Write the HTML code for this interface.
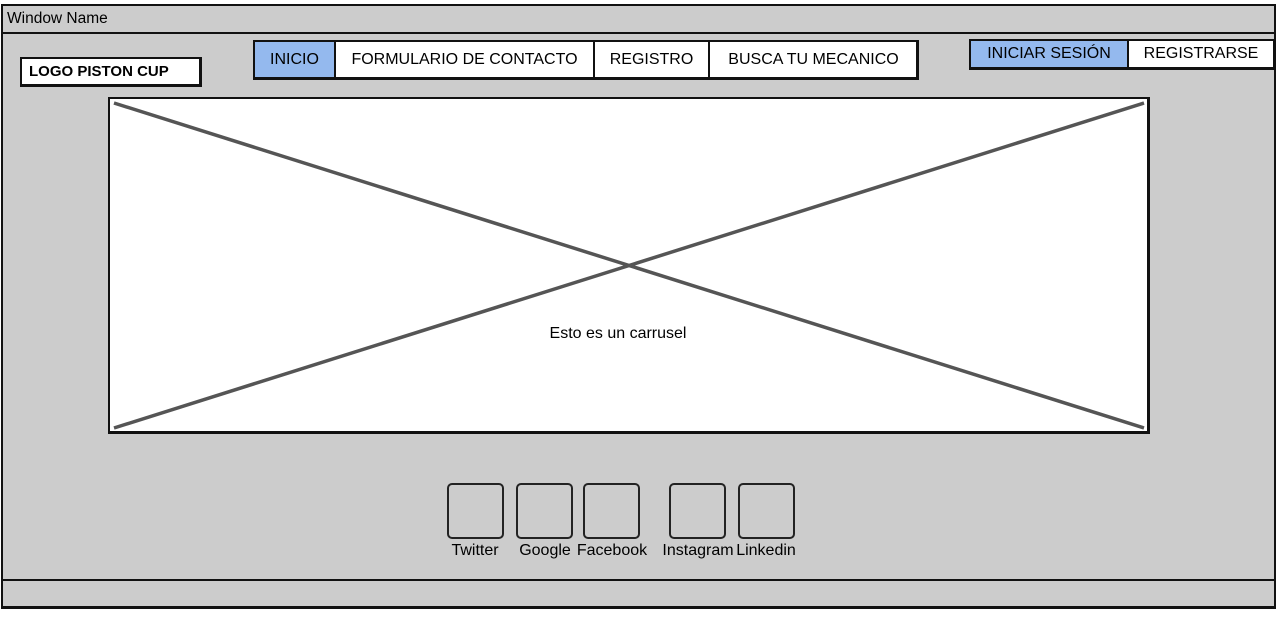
<!DOCTYPE html>
<html><head><style>
body{margin:0;width:1287px;height:618px;background:#fff;position:relative;overflow:hidden;font-family:"Liberation Sans",sans-serif;color:#000}
.a{position:absolute;box-sizing:border-box}
.t{display:flex;align-items:center;justify-content:center;font-size:16px}
.ic{border:2px solid #222;border-radius:5px}
.lb{font-size:16px;top:541px;height:20px;text-align:center}
</style></head><body>
<div class="a" style="left:1px;top:4px;width:1275px;height:605px;background:#ccc;border:2px solid #111"></div>
<div class="a" style="left:1px;top:4px;width:1275px;height:30px;border-bottom:2px solid #111;border-top:2px solid #111"></div>
<div class="a" style="left:7px;top:10px;font-size:15.5px">Window Name</div>
<div class="a t" style="left:20px;top:57px;width:182px;height:30px;background:#fff;border:2px solid #111;border-right-width:3px;border-bottom-width:3px;justify-content:flex-start;padding-left:7px;font-weight:bold;font-size:15px">LOGO PISTON CUP</div>
<div class="a" style="left:253px;top:40px;width:666px;height:40px;background:#fff;border:2px solid #111;border-right-width:3px;border-bottom-width:3px"></div>
<div class="a t" style="left:255px;top:42px;width:81px;height:35px;background:#94b9ee;border-right:2px solid #111">INICIO</div>
<div class="a t" style="left:336px;top:42px;width:259px;height:35px;border-right:2px solid #111">FORMULARIO DE CONTACTO</div>
<div class="a t" style="left:595px;top:42px;width:115px;height:35px;border-right:2px solid #111">REGISTRO</div>
<div class="a t" style="left:710px;top:42px;width:207px;height:35px">BUSCA TU MECANICO</div>
<div class="a" style="left:969px;top:39px;width:306px;height:31px;background:#fff;border:2px solid #111;border-bottom-width:3px"></div>
<div class="a t" style="left:971px;top:41px;width:158px;height:26px;background:#94b9ee;border-right:2px solid #111">INICIAR SESIÓN</div>
<div class="a t" style="left:1129px;top:41px;width:144px;height:26px">REGISTRARSE</div>
<div class="a" style="left:108px;top:97px;width:1042px;height:337px;background:#fff;border:2px solid #111;border-right-width:3px;border-bottom-width:3px"></div>
<svg class="a" style="left:0;top:0" width="1287" height="618"><line x1="114" y1="103" x2="1144" y2="428" stroke="#555" stroke-width="3.5"/><line x1="114" y1="428" x2="1144" y2="103" stroke="#555" stroke-width="3.5"/></svg>
<div class="a" style="left:518px;top:325px;width:200px;text-align:center;font-size:16px">Esto es un carrusel</div>
<div class="a ic" style="left:447px;top:483px;width:57px;height:56px"></div>
<div class="a ic" style="left:516px;top:483px;width:57px;height:56px"></div>
<div class="a ic" style="left:583px;top:483px;width:57px;height:56px"></div>
<div class="a ic" style="left:669px;top:483px;width:57px;height:56px"></div>
<div class="a ic" style="left:738px;top:483px;width:57px;height:56px"></div>
<div class="a lb" style="left:440px;width:70px;top:542px">Twitter</div>
<div class="a lb" style="left:512px;width:66px;top:542px">Google</div>
<div class="a lb" style="left:572px;width:80px;top:542px">Facebook</div>
<div class="a lb" style="left:656px;width:84px;top:542px">Instagram</div>
<div class="a lb" style="left:731px;width:70px;top:542px">Linkedin</div>
<div class="a" style="left:1px;top:579px;width:1275px;height:30px;border-top:2px solid #111;border-bottom:3px solid #111"></div>
</body></html>
